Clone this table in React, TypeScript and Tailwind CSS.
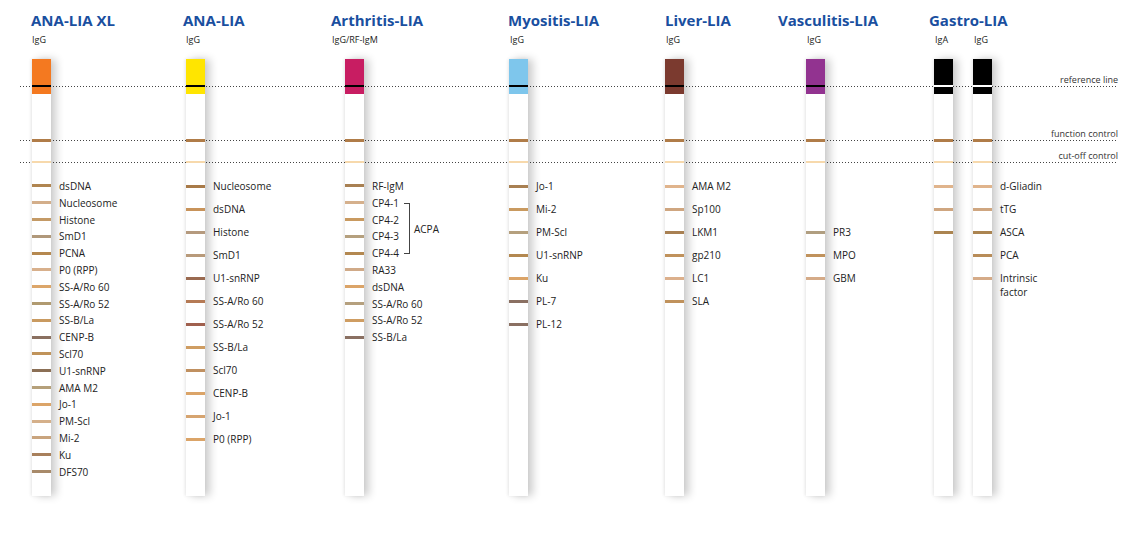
type Band = { c: string; t?: string; two?: string } | null

type Strip = { sub: string; head: string; line: string; bands: Band[] }

type Column = {
  title: string
  width: string
  offset: string
  subOffset: string
  spacing: 'tight' | 'wide'
  strips: Strip[]
  acpa?: boolean
}

const spacings = {
  tight: { row: 'h-[16.8px]', band: 'mt-[6.9px]', label: 'mt-[1.4px]', pad: 'pt-[14.6px]' },
  wide: { row: 'h-[23px]', band: 'mt-[10px]', label: 'mt-[4.5px]', pad: 'pt-[11.5px]' },
}

const columns: Column[] = [
  {
    title: 'ANA-LIA XL',
    width: 'w-[152px]',
    offset: 'ml-[1px]',
    subOffset: 'ml-[1px]',
    spacing: 'tight',
    strips: [
      {
        sub: 'IgG',
        head: 'bg-[#f47920]',
        line: 'bg-black',
        bands: [
          { c: 'bg-[#b08550]', t: 'dsDNA' },
          { c: 'bg-[#d3ae8a]', t: 'Nucleosome' },
          { c: 'bg-[#c49a66]', t: 'Histone' },
          { c: 'bg-[#b0987a]', t: 'SmD1' },
          { c: 'bg-[#b5884f]', t: 'PCNA' },
          { c: 'bg-[#d8b08c]', t: 'P0 (RPP)' },
          { c: 'bg-[#dca66a]', t: 'SS-A/Ro 60' },
          { c: 'bg-[#b09a70]', t: 'SS-A/Ro 52' },
          { c: 'bg-[#c99a60]', t: 'SS-B/La' },
          { c: 'bg-[#8a7060]', t: 'CENP-B' },
          { c: 'bg-[#c0935a]', t: 'Scl70' },
          { c: 'bg-[#8b6f55]', t: 'U1-snRNP' },
          { c: 'bg-[#b5a07a]', t: 'AMA M2' },
          { c: 'bg-[#dba468]', t: 'Jo-1' },
          { c: 'bg-[#d5b08a]', t: 'PM-Scl' },
          { c: 'bg-[#c9a47e]', t: 'Mi-2' },
          { c: 'bg-[#a8805c]', t: 'Ku' },
          { c: 'bg-[#a88a6a]', t: 'DFS70' },
        ],
      },
    ],
  },
  {
    title: 'ANA-LIA',
    width: 'w-[148px]',
    offset: 'ml-[3px]',
    subOffset: 'ml-[3px]',
    spacing: 'wide',
    strips: [
      {
        sub: 'IgG',
        head: 'bg-[#ffe500]',
        line: 'bg-black',
        bands: [
          { c: 'bg-[#a87a48]', t: 'Nucleosome' },
          { c: 'bg-[#c8935a]', t: 'dsDNA' },
          { c: 'bg-[#b59a7e]', t: 'Histone' },
          { c: 'bg-[#b89a7a]', t: 'SmD1' },
          { c: 'bg-[#9a6a50]', t: 'U1-snRNP' },
          { c: 'bg-[#b57a55]', t: 'SS-A/Ro 60' },
          { c: 'bg-[#a0604e]', t: 'SS-A/Ro 52' },
          { c: 'bg-[#cf9d62]', t: 'SS-B/La' },
          { c: 'bg-[#c09060]', t: 'Scl70' },
          { c: 'bg-[#dba468]', t: 'CENP-B' },
          { c: 'bg-[#d6a470]', t: 'Jo-1' },
          { c: 'bg-[#dba468]', t: 'P0 (RPP)' },
        ],
      },
    ],
  },
  {
    title: 'Arthritis-LIA',
    width: 'w-[177px]',
    offset: 'ml-[14px]',
    subOffset: 'ml-[1px]',
    spacing: 'tight',
    acpa: true,
    strips: [
      {
        sub: 'IgG/RF-IgM',
        head: 'bg-[#c81d62]',
        line: 'bg-black',
        bands: [
          { c: 'bg-[#a88052]', t: 'RF-IgM' },
          { c: 'bg-[#d5b08c]', t: 'CP4-1' },
          { c: 'bg-[#c99a60]', t: 'CP4-2' },
          { c: 'bg-[#b5a07e]', t: 'CP4-3' },
          { c: 'bg-[#b38850]', t: 'CP4-4' },
          { c: 'bg-[#d0aa88]', t: 'RA33' },
          { c: 'bg-[#dba468]', t: 'dsDNA' },
          { c: 'bg-[#b5a07e]', t: 'SS-A/Ro 60' },
          { c: 'bg-[#cf9d62]', t: 'SS-A/Ro 52' },
          { c: 'bg-[#8a7062]', t: 'SS-B/La' },
        ],
      },
    ],
  },
  {
    title: 'Myositis-LIA',
    width: 'w-[157px]',
    offset: 'ml-[1px]',
    subOffset: 'ml-[2px]',
    spacing: 'wide',
    strips: [
      {
        sub: 'IgG',
        head: 'bg-[#7ec6ec]',
        line: 'bg-black',
        bands: [
          { c: 'bg-[#a88052]', t: 'Jo-1' },
          { c: 'bg-[#c99a60]', t: 'Mi-2' },
          { c: 'bg-[#b5a07e]', t: 'PM-Scl' },
          { c: 'bg-[#b38850]', t: 'U1-snRNP' },
          { c: 'bg-[#dba468]', t: 'Ku' },
          { c: 'bg-[#8a7062]', t: 'PL-7' },
          { c: 'bg-[#8a7062]', t: 'PL-12' },
        ],
      },
    ],
  },
  {
    title: 'Liver-LIA',
    width: 'w-[113px]',
    offset: 'ml-0',
    subOffset: 'ml-[1px]',
    spacing: 'wide',
    strips: [
      {
        sub: 'IgG',
        head: 'bg-[#7b3a2f]',
        line: 'bg-black',
        bands: [
          { c: 'bg-[#e0b48c]', t: 'AMA M2' },
          { c: 'bg-[#cfa680]', t: 'Sp100' },
          { c: 'bg-[#a88052]', t: 'LKM1' },
          { c: 'bg-[#c0925c]', t: 'gp210' },
          { c: 'bg-[#dcb08c]', t: 'LC1' },
          { c: 'bg-[#c0925c]', t: 'SLA' },
        ],
      },
    ],
  },
  {
    title: 'Vasculitis-LIA',
    width: 'w-[151px]',
    offset: 'ml-[28px]',
    subOffset: 'ml-[29px]',
    spacing: 'wide',
    strips: [
      {
        sub: 'IgG',
        head: 'bg-[#923390]',
        line: 'bg-black',
        bands: [
          null,
          null,
          { c: 'bg-[#b09e80]', t: 'PR3' },
          { c: 'bg-[#c0925c]', t: 'MPO' },
          { c: 'bg-[#d5ab88]', t: 'GBM' },
        ],
      },
    ],
  },
  {
    title: 'Gastro-LIA',
    width: 'flex-1',
    offset: 'ml-[5px]',
    subOffset: 'ml-[6px]',
    spacing: 'wide',
    strips: [
      {
        sub: 'IgA',
        head: 'bg-black',
        line: 'bg-white',
        bands: [{ c: 'bg-[#e0b48c]' }, { c: 'bg-[#cfa680]' }, { c: 'bg-[#ab8450]' }],
      },
      {
        sub: 'IgG',
        head: 'bg-black',
        line: 'bg-white',
        bands: [
          { c: 'bg-[#e0b48c]', t: 'd-Gliadin' },
          { c: 'bg-[#cfa680]', t: 'tTG' },
          { c: 'bg-[#ab8450]', t: 'ASCA' },
          { c: 'bg-[#b88c58]', t: 'PCA' },
          { c: 'bg-[#d5ab88]', t: 'Intrinsic', two: 'factor' },
        ],
      },
    ],
  },
]

const guides = [
  { label: 'reference line', top: 'top-[74.5px]' },
  { label: 'function control', top: 'top-[128.5px]' },
  { label: 'cut-off control', top: 'top-[150.5px]' },
]

function TestStrip({ strip, spacing, acpa }: { strip: Strip; spacing: 'tight' | 'wide'; acpa?: boolean }) {
  const s = spacings[spacing]
  return (
    <div className="relative w-[19px] h-[437px] bg-white flex flex-col shadow-[5px_0_8px_rgba(0,0,0,0.2),-1px_0_3px_rgba(0,0,0,0.08)]">
      <div className={`h-[35px] flex flex-col ${strip.head}`}>
        <div className="h-[26px]" />
        <div className={`h-[2px] ${strip.line}`} />
      </div>
      <div className="mt-[45px] h-[3px] bg-[#b07c48]" />
      <div className="mt-[19px] h-[2px] bg-[#f7d9ac]" />
      <div className={`flex flex-col ${s.pad}`}>
        {strip.bands.map((b, i) => (
          <div key={i} className={`flex items-start ${s.row}`}>
            {b && <div className={`w-[19px] h-[3px] shrink-0 ${s.band} ${b.c}`} />}
            {b?.t && (
              <div className={`ml-[8px] whitespace-nowrap text-[10px] leading-[14px] text-[#222] ${s.label}`}>
                <div>{b.t}</div>
                {b.two && <div>{b.two}</div>}
              </div>
            )}
          </div>
        ))}
      </div>
      {acpa && (
        <div className="absolute left-[59px] top-[144px] flex items-center">
          <div className="w-[6px] h-[51px] border-y border-r border-[#444]" />
          <span className="ml-[4px] text-[10px] leading-[14px] text-[#222]">ACPA</span>
        </div>
      )}
    </div>
  )
}

export default function App() {
  return (
    <div className="relative w-[1128px] h-[534px] bg-white overflow-hidden font-['Open_Sans','Noto_Sans',sans-serif]">
      {guides.map((g) => (
        <div key={g.label} className={`absolute left-[20px] w-[1098px] flex flex-col items-end ${g.top}`}>
          <span className="h-[10px] text-[9px] leading-[10px] text-[#333] whitespace-nowrap">{g.label}</span>
          <div className="mt-[1.5px] w-full h-px bg-[image:repeating-linear-gradient(90deg,#444_0px,#444_1px,transparent_1px,transparent_3px)]" />
        </div>
      ))}

      <div className="relative flex pl-[31px] pt-[13px]">
        {columns.map((col) => (
          <div key={col.title} className={`${col.width} shrink-0 flex flex-col`}>
            <h2 className="text-[15px] leading-[15px] font-bold text-[#1a4f9f] whitespace-nowrap">{col.title}</h2>
            <div className={`flex gap-[20px] mt-[7px] ${col.subOffset}`}>
              {col.strips.map((st) => (
                <div key={st.sub} className="w-[19px] flex">
                  <span className="text-[9px] leading-[10px] text-[#222] whitespace-nowrap">{st.sub}</span>
                </div>
              ))}
            </div>
            <div className={`flex gap-[20px] mt-[14px] ${col.offset}`}>
              {col.strips.map((st) => (
                <TestStrip key={st.sub} strip={st} spacing={col.spacing} acpa={col.acpa} />
              ))}
            </div>
          </div>
        ))}
      </div>
    </div>
  )
}
